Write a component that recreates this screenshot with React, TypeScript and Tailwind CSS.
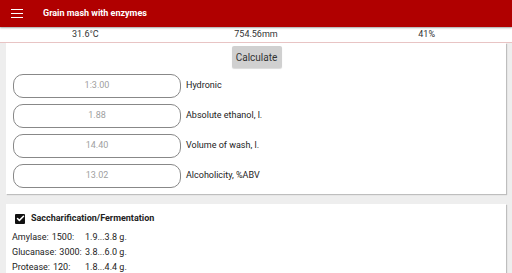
import { Check } from 'lucide-react';

const fields = [
  { value: '1:3.00', label: 'Hydronic' },
  { value: '1.88', label: 'Absolute ethanol, l.' },
  { value: '14.40', label: 'Volume of wash, l.' },
  { value: '13.02', label: 'Alcoholicity, %ABV' },
];

const enzymes = [
  { name: 'Amylase:', units: '1500:', dose: '1.9...3.8 g.' },
  { name: 'Glucanase:', units: '3000:', dose: '3.8...6.0 g.' },
  { name: 'Protease:', units: '120:', dose: '1.8...4.4 g.' },
];

export default function App() {
  return (
    <div className="w-[512px] h-[273px] overflow-hidden bg-[#eeeeee] font-['Roboto',sans-serif] text-[#222]">
      {/* Toolbar */}
      <div className="h-[27px] bg-[#b00000] flex items-center shadow-[0_1px_2px_rgba(0,0,0,0.3)] relative z-10">
        <div className="w-[43px] flex justify-center pl-[1px] pr-[10px]">
          <div className="flex flex-col gap-[2.5px]">
            <div className="w-[12px] h-[1.5px] bg-white" />
            <div className="w-[12px] h-[1.5px] bg-white" />
            <div className="w-[12px] h-[1.5px] bg-white" />
          </div>
        </div>
        <span className="text-white text-[9px] font-bold">Grain mash with enzymes</span>
      </div>

      {/* Status */}
      <div className="h-[15px] mt-[1px] bg-white grid grid-cols-3 text-[9px] text-[#333] border-b border-[#e8c4c4]">
        <div className="flex items-center justify-center">31.6°C</div>
        <div className="flex items-center justify-center">754.56mm</div>
        <div className="flex items-center justify-center">41%</div>
      </div>

      <div className="pl-[6px] pr-[6px]">
        {/* Calculation card */}
        <div className="bg-white h-[151px] shadow-[1px_1px_1px_rgba(0,0,0,0.2)] flex flex-col">
          <div className="flex justify-center pt-[3px] pl-[1px]">
            <div className="bg-[#d0d0d0] w-[50px] h-[22px] rounded-[2px] flex items-center justify-center text-[10px] text-[#333] shadow-[0_1px_1px_rgba(0,0,0,0.15)]">
              Calculate
            </div>
          </div>
          <div className="flex flex-col gap-[6px] mt-[6px] pl-[7px]">
            {fields.map((f) => (
              <div key={f.label} className="flex items-center">
                <div className="w-[168px] h-[24px] rounded-[10px] border border-[#888] flex items-center justify-center text-[9px] text-[#a0a0a0]">
                  {f.value}
                </div>
                <span className="ml-[5px] text-[9px] text-[#222]">{f.label}</span>
              </div>
            ))}
          </div>
        </div>

        {/* Enzymes card */}
        <div className="bg-white mt-[10px] h-[80px] shadow-[1px_1px_1px_rgba(0,0,0,0.2)] pt-[8px]">
          <div className="flex items-center pl-[9px]">
            <div className="w-[10px] h-[10px] bg-[#111] rounded-[1px] flex items-center justify-center">
              <Check className="w-[9px] h-[9px] text-white" strokeWidth={4} />
            </div>
            <span className="ml-[6px] text-[9px] font-bold">Saccharification/Fermentation</span>
          </div>
          <div className="mt-[4px] pl-[6px] flex flex-col text-[9px] leading-[15px]">
            {enzymes.map((e) => (
              <div key={e.name} className="flex items-center">
                <div className="min-w-[73px] flex gap-[3px] pr-[3px]">
                  <span>{e.name}</span>
                  <span>{e.units}</span>
                </div>
                <div>{e.dose}</div>
              </div>
            ))}
          </div>
        </div>
      </div>
    </div>
  );
}
